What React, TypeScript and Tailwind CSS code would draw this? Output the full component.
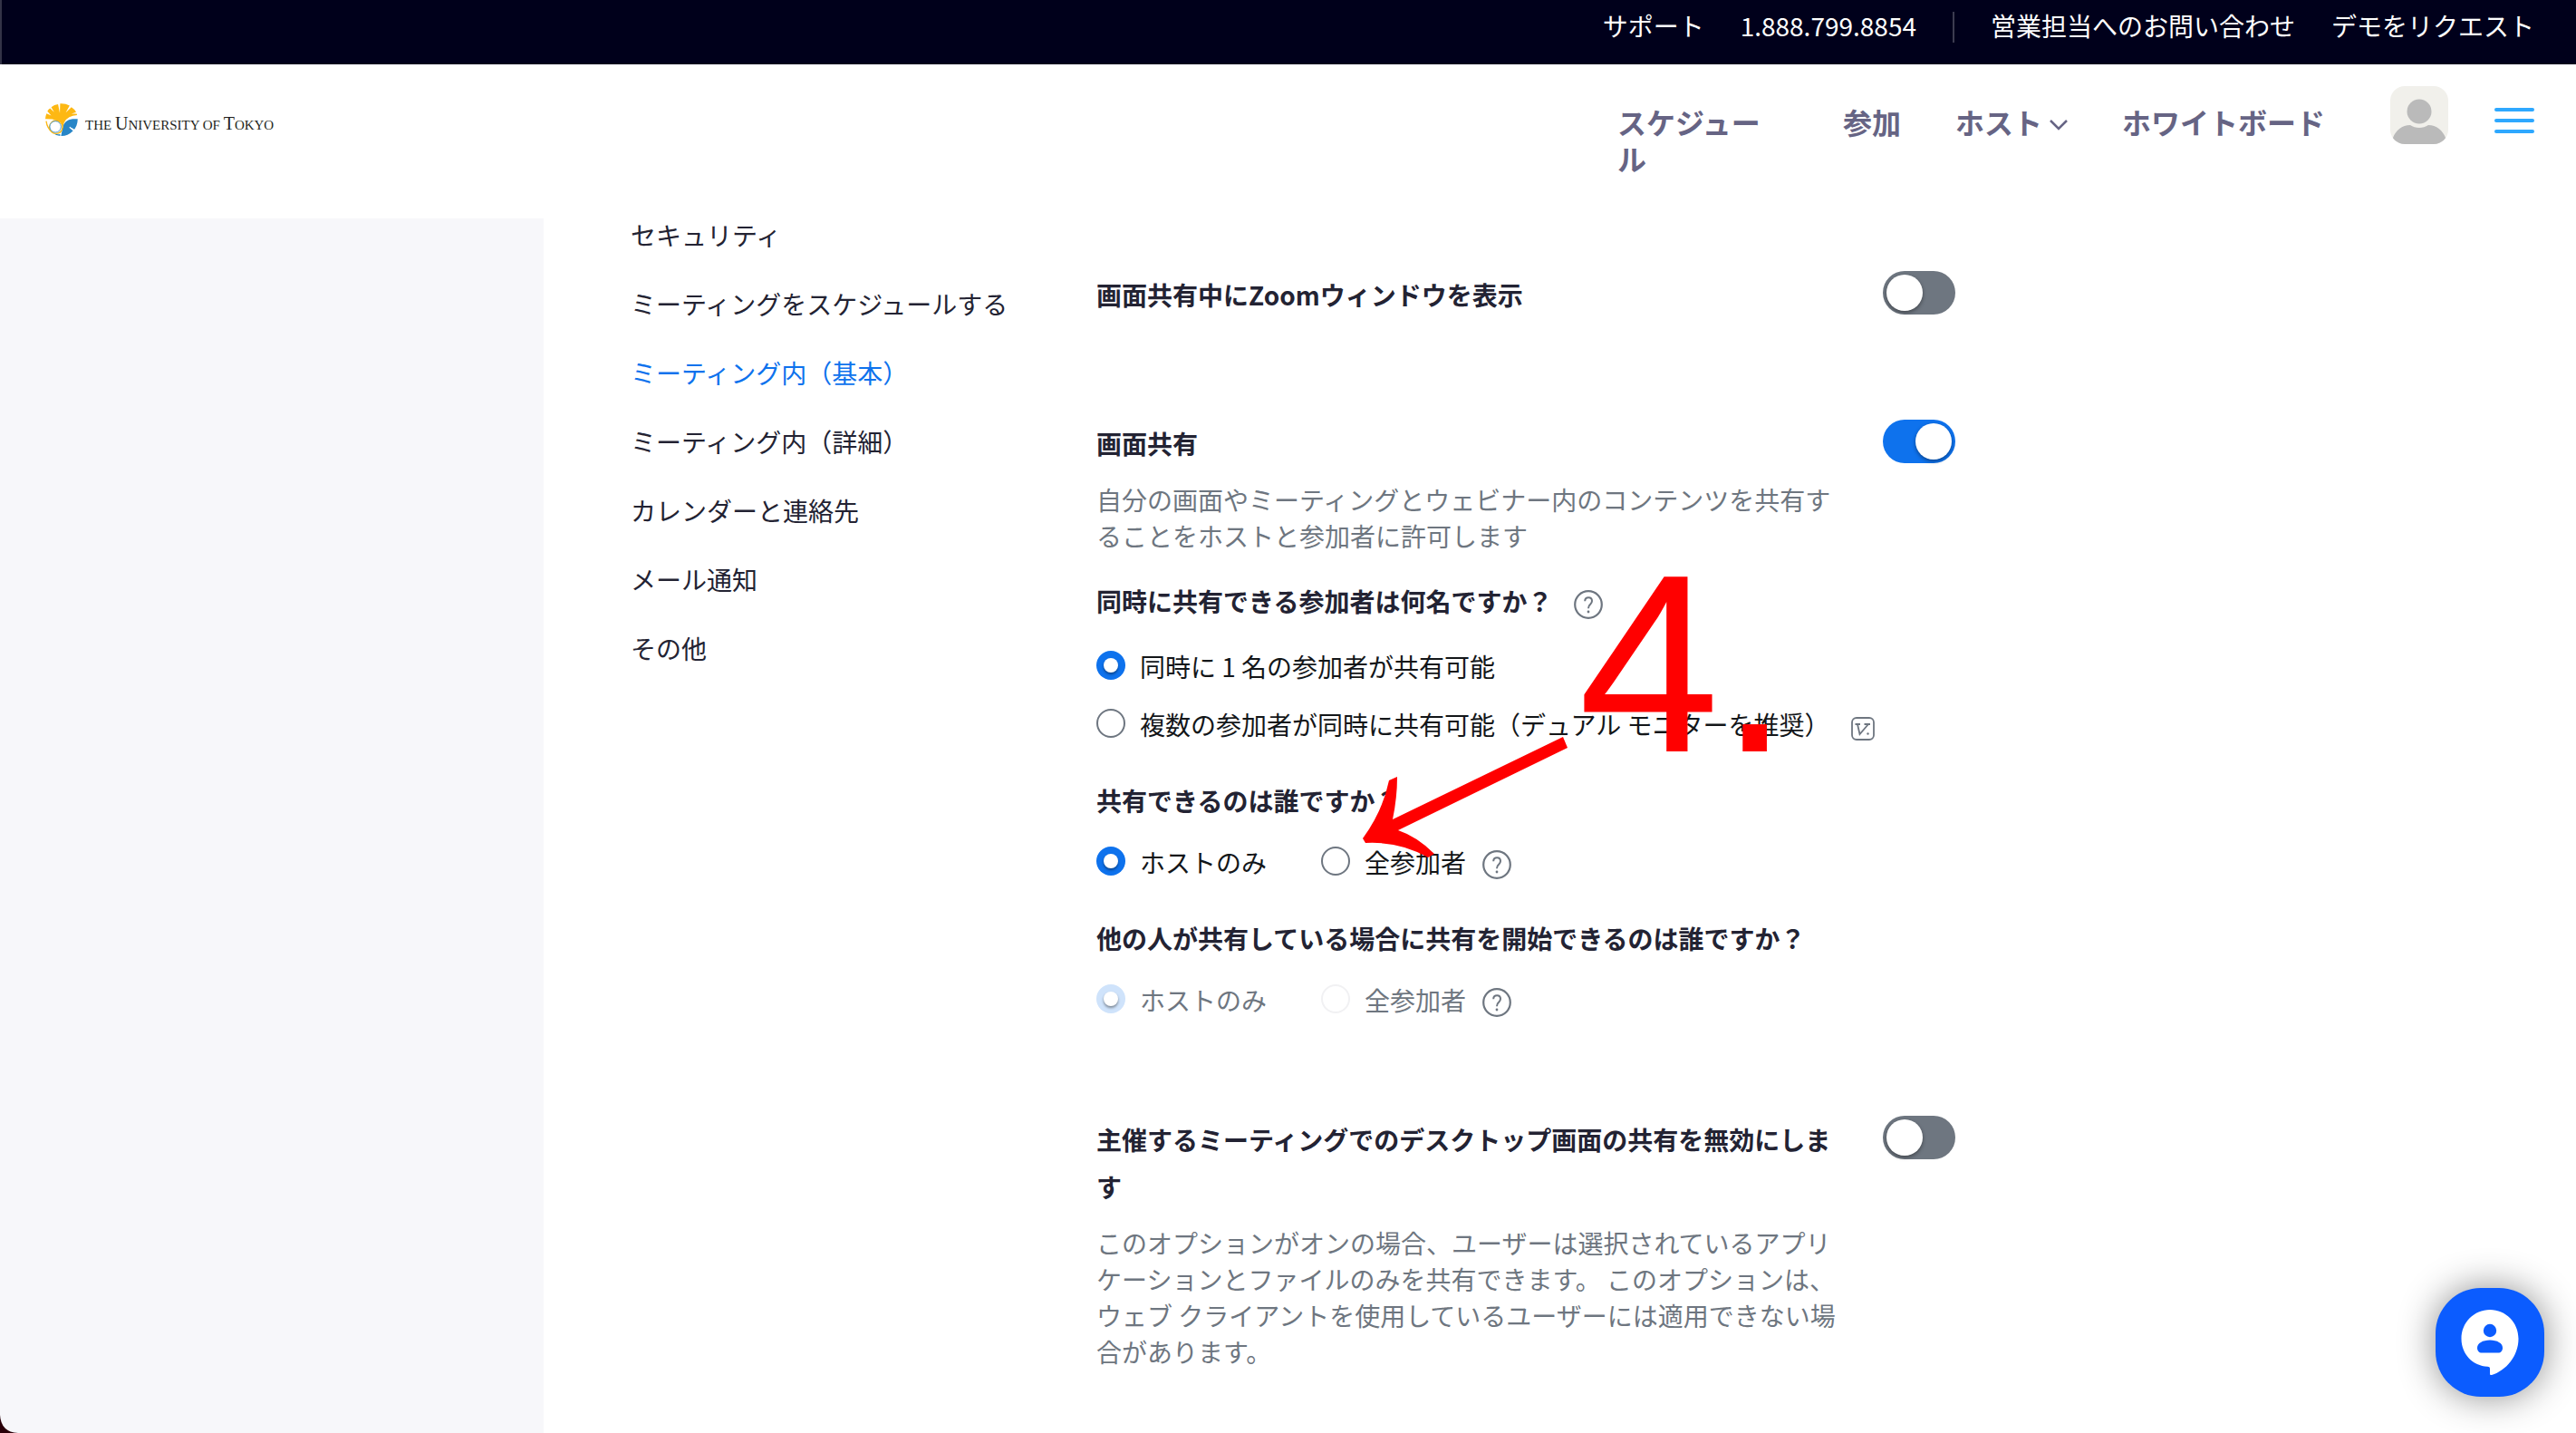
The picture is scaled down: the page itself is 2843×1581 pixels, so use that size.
import { useState } from "react";
import type { ReactNode } from "react";

const sections = [
  "セキュリティ",
  "ミーティングをスケジュールする",
  "ミーティング内（基本）",
  "ミーティング内（詳細）",
  "カレンダーと連絡先",
  "メール通知",
  "その他",
];

function Logo() {
  return (
    <a href="#" aria-label="The University of Tokyo" className="mt-[43px] ml-[50px] flex items-start gap-2 text-[#231f20]">
      <svg viewBox="0 0 110 110" className="size-9" aria-hidden="true">
        <path d="M109 53 C84 50 66 58 60 76 C57 88 56 98 53 110 A55 55 0 0 0 109 53 Z" fill="#2886c7" />
        <path d="M82 80 L98 94 M88 84 L100 92" stroke="#fff" strokeWidth="4" />
        <path d="M26 100 Q38 106 50 104 L50 110 Q36 109 26 100 Z" fill="#2886c7" />
        <path
          d="M0 53 Q0 44 4 34 L20 41 L7 27 Q11 20 16 17 L30 30 L20 13 Q30 4 43 3 L49 33 L50 1 Q68 0 82 8 L69 31 L88 13 Q98 19 104 30 L88 35 L106 35 Q107 38 107 40 Q76 42 64 64 Q60 72 57 90 Q54 98 48 102 Q54 84 51 70 Q46 52 0 53 Z"
          fill="#fdb813"
        />
        <path d="M3 60 Q6 84 24 98" fill="none" stroke="#fdb813" strokeWidth="4" />
        <circle cx="36" cy="80" r="22" fill="#fff" stroke="#fdb813" strokeWidth="4" />
        <circle cx="34" cy="79" r="19" fill="#fff" stroke="#2886c7" strokeWidth="2.500" />
      </svg>
      <span className="mt-1 font-['Liberation_Serif',serif] text-[15px] leading-9 whitespace-nowrap">
        THE <span className="text-[20px]">U</span>NIVERSITY OF <span className="text-[20px]">T</span>OKYO
      </span>
    </a>
  );
}

function HelpButton() {
  return (
    <button type="button" aria-label="ヘルプ" className="mt-2 size-8 shrink-0 text-[#6e7680]">
      <svg viewBox="0 0 32 32" fill="none" stroke="currentColor" aria-hidden="true">
        <circle cx="16" cy="16" r="14.800" strokeWidth="2.200" />
        <path d="M12.200 12.200 C12.200 9.800 13.800 8.200 16.200 8.200 C18.500 8.200 20 9.800 20 12 C20 14.100 18.800 15 17.800 16 C16.700 17 16 17.700 16 20.300" strokeWidth="2" />
        <circle cx="16" cy="24" r="1.400" fill="currentColor" stroke="none" />
      </svg>
    </button>
  );
}

function Toggle({ label, initial = false }: { label: string; initial?: boolean }) {
  const [on, setOn] = useState(initial);
  return (
    <input
      type="checkbox"
      role="switch"
      aria-label={label}
      checked={on}
      onChange={() => setOn(!on)}
      className="h-12 w-20 shrink-0 appearance-none rounded-full bg-[#6e7680] p-1 before:block before:size-10 before:rounded-full before:bg-white before:shadow-[0_2px_4px_rgba(0,0,0,0.4)] checked:bg-[#0e72ed] checked:before:ml-8"
    />
  );
}

function Radio({ name, label, checked, disabled }: { name: string; label: string; checked?: boolean; disabled?: boolean }) {
  return (
    <label className="flex items-center gap-4 text-[#131619] has-disabled:text-[#6e7680]">
      <input
        type="radio"
        name={name}
        defaultChecked={checked}
        disabled={disabled}
        className="flex size-8 shrink-0 appearance-none items-center justify-center rounded-full border-2 border-[#6e7680] bg-white before:size-4 before:rounded-full before:bg-white checked:border-0 checked:bg-[#0e72ed] checked:before:shadow-[0_2px_3px_rgba(0,0,0,0.4)] disabled:border-[#f1f1f3] disabled:checked:bg-[#cfe3fb]"
      />
      <span className="mt-0.5">{label}</span>
    </label>
  );
}

function Setting({ title, on, children }: { title: string; on?: boolean; children?: ReactNode }) {
  return (
    <section className="flex items-start gap-9">
      <div className="w-[832px]">
        <h3 className="font-bold leading-[52px]">{title}</h3>
        {children}
      </div>
      <Toggle label={title} initial={on} />
    </section>
  );
}

function Annotation() {
  return (
    <div className="pointer-events-none absolute top-0 left-0 text-[#ff0000]">
      <span className="absolute top-[572px] left-[1742px] font-['Liberation_Sans',sans-serif] text-[280px] leading-[320px]">4.</span>
      <svg className="absolute top-[800px] left-[1500px] h-[150px] w-[240px]" viewBox="1500 800 240 150" aria-hidden="true">
        <path
          d="M1725 813 L1730 825 L1543 916 Q1564 923 1583 942 L1576 946 Q1545 928 1507 930 L1504 925 Q1526 895 1533 861 L1542 857 Q1542 880 1537 904 Z"
          fill="currentColor"
        />
      </svg>
    </div>
  );
}

export default function App() {
  return (
    <div className="relative flex min-h-screen flex-col overflow-hidden bg-white font-['Noto_Sans_CJK_JP',sans-serif] text-[28px] leading-10 text-[#232333]">
      <div className="flex h-[71px] items-start justify-end border-l-2 border-[#333347] bg-[#00001b] pt-2 pr-[46px] text-white">
        <a href="#" className="whitespace-nowrap">サポート</a>
        <a href="#" className="ml-10 whitespace-nowrap">1.888.799.8854</a>
        <span className="mt-[5px] ml-10 h-[34px] w-[2px] bg-[#3c3c50]" />
        <a href="#" className="ml-10 whitespace-nowrap">営業担当へのお問い合わせ</a>
        <a href="#" className="ml-10 whitespace-nowrap">デモをリクエスト</a>
      </div>

      <header className="flex h-[170px] items-start justify-between">
        <Logo />
        <nav className="flex items-start pr-[46px] text-[32px] font-bold text-[#666484]">
          <a href="#" className="mt-[43px] w-[168px]">スケジュール</a>
          <a href="#" className="mt-[43px] ml-[81px] whitespace-nowrap">参加</a>
          <button type="button" className="mt-[43px] ml-[60px] flex items-center gap-2 font-bold whitespace-nowrap">
            ホスト
            <svg viewBox="0 0 20 12" className="mt-2 h-3 w-5" fill="none" stroke="currentColor" strokeWidth="2.500" aria-hidden="true">
              <path d="M1 1 L10 10 L19 1" />
            </svg>
          </button>
          <a href="#" className="mt-[43px] ml-[60px] whitespace-nowrap">ホワイトボード</a>
          <button type="button" aria-label="プロフィール" className="mt-6 ml-[72px] size-16 overflow-hidden rounded-2xl bg-[#f1f0eb]">
            <svg viewBox="0 0 64 64" fill="#bababa" aria-hidden="true">
              <circle cx="32" cy="28" r="13.500" />
              <path d="M3 57 C6 49 13 43 22 43 C28 47 36 47 42 43 C51 43 58 49 61 57 L61 64 L3 64 Z" />
            </svg>
          </button>
          <button type="button" aria-label="メニュー" className="mt-12 ml-[51px] flex w-11 flex-col gap-2">
            <span className="h-1 w-full rounded-full bg-[#2ea8ff]" />
            <span className="h-1 w-full rounded-full bg-[#2ea8ff]" />
            <span className="h-1 w-full rounded-full bg-[#2ea8ff]" />
          </button>
        </nav>
      </header>

      <div className="flex flex-1">
        <aside className="w-[600px] shrink-0 bg-[#f7f7fa]" />
        <nav className="flex w-[610px] shrink-0 flex-col gap-10 pl-24 leading-9">
          {sections.map((name, index) => (
            <a key={name} href="#" className={index === 2 ? "text-[#0e72ed]" : ""}>
              {name}
            </a>
          ))}
        </nav>
        <main className="flex flex-1 flex-col gap-[108px] pt-[58px]">
          <div className="pb-1">
            <Setting title="画面共有中にZoomウィンドウを表示" />
          </div>
          <Setting title="画面共有" on>
            <p className="mt-4 text-[#6e7680]">自分の画面やミーティングとウェビナー内のコンテンツを共有することをホストと参加者に許可します</p>
            <div className="mt-8 flex items-center gap-6">
              <h4 className="font-bold">同時に共有できる参加者は何名ですか？</h4>
              <HelpButton />
            </div>
            <div className="mt-[30px] flex flex-col gap-[22px]">
              <Radio name="count" label="同時に 1 名の参加者が共有可能" checked />
              <div className="flex items-center gap-6 whitespace-nowrap">
                <Radio name="count" label="複数の参加者が同時に共有可能（デュアル モニターを推奨）" />
                <svg viewBox="0 0 26 26" className="mt-3 size-[26px] shrink-0" fill="none" stroke="#6e7680" aria-hidden="true">
                  <rect x="1" y="1" width="24" height="24" rx="5" strokeWidth="1.800" />
                  <path d="M4.500 8 H10 M7 8 L9.500 19 L19 8 M14.500 8 H21" strokeWidth="1.800" />
                  <circle cx="18.500" cy="18.500" r="1.200" fill="#6e7680" stroke="none" />
                </svg>
              </div>
            </div>
            <h4 className="mt-11 font-bold">共有できるのは誰ですか？</h4>
            <div className="mt-[26px] flex items-center">
              <Radio name="who" label="ホストのみ" checked />
              <div className="ml-[60px] flex items-center gap-[18px]">
                <Radio name="who" label="全参加者" />
                <HelpButton />
              </div>
            </div>
            <h4 className="mt-11 font-bold">他の人が共有している場合に共有を開始できるのは誰ですか？</h4>
            <div className="mt-[26px] flex items-center">
              <Radio name="takeover" label="ホストのみ" checked disabled />
              <div className="ml-[60px] flex items-center gap-[18px]">
                <Radio name="takeover" label="全参加者" disabled />
                <HelpButton />
              </div>
            </div>
          </Setting>
          <Setting title="主催するミーティングでのデスクトップ画面の共有を無効にします">
            <p className="mt-4 text-[#6e7680]">
              このオプションがオンの場合、ユーザーは選択されているアプリケーションとファイルのみを共有できます。 このオプションは、ウェブ クライアントを使用しているユーザーには適用できない場合があります。
            </p>
          </Setting>
        </main>
      </div>

      <Annotation />

      <svg viewBox="0 0 20 20" className="absolute bottom-0 left-0 size-5" aria-hidden="true">
        <path d="M0 0 Q1 19 20 20 L0 20 Z" fill="#2a0009" />
      </svg>

      <button
        type="button"
        aria-label="チャット"
        className="absolute right-[35px] bottom-10 size-[120px] rounded-[50px] bg-[#0b5cff] shadow-[0_0_40px_rgba(0,0,0,0.45)]"
      >
        <svg viewBox="0 0 120 120" aria-hidden="true">
          <path d="M60 24 C77.500 24 91.500 38 91.500 56 C91.500 75 78 91 62 96 C60.800 96.300 60 96 60 94.500 L60 89 C60 87.500 59 87 57.500 86.800 C41 86 28.500 73 28.500 56 C28.500 38 42.500 24 60 24 Z" fill="#fff" />
          <circle cx="60" cy="47" r="7.200" fill="#0b5cff" />
          <path d="M60 57.500 C68 57.500 74 61 74 66 C74 69.500 72 71.500 69 71.500 L51 71.500 C48 71.500 46 69.500 46 66 C46 61 52 57.500 60 57.500 Z" fill="#0b5cff" />
        </svg>
      </button>
    </div>
  );
}
